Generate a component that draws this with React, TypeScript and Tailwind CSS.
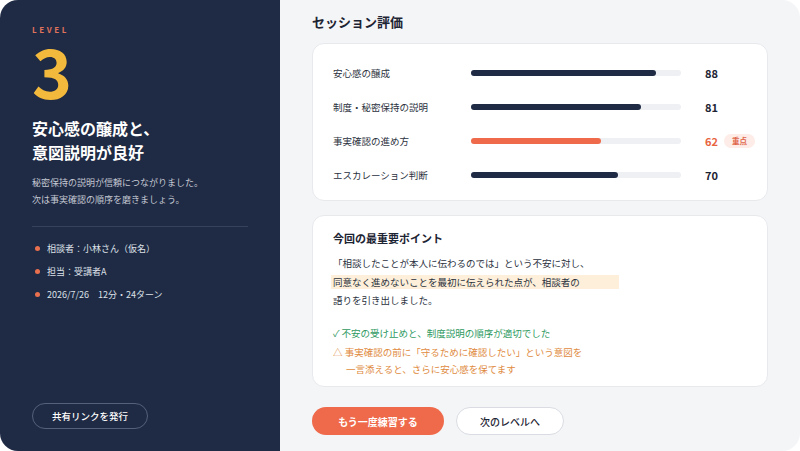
import React from "react";

const font = { fontFamily: '"Noto Sans CJK JP", "Noto Sans", sans-serif' };

const rows = [
  { label: "安心感の醸成", value: 88, focus: false },
  { label: "制度・秘密保持の説明", value: 81, focus: false },
  { label: "事実確認の進め方", value: 62, focus: true },
  { label: "エスカレーション判断", value: 70, focus: false },
];

export default function App() {
  return (
    <div className="w-[800px] h-[451px] bg-white" style={font}>
      <div className="w-[800px] h-[451px] rounded-[18px] overflow-hidden flex">
        {/* Left panel */}
        <div className="w-[280px] shrink-0 h-full bg-[#1f2a44] flex flex-col px-8 pt-[24px] pb-[22px]">
          <div className="text-[8px] leading-[12px] font-bold tracking-[0.32em] text-[#e0735c]">LEVEL</div>
          <div className="text-[68px] leading-[68px] font-bold text-[#f3b93c]">3</div>
          <div className="mt-[12px] text-[16px] leading-[24px] font-bold text-white">
            安心感の醸成と、
            <br />
            意図説明が良好
          </div>
          <div className="mt-[10px] text-[9px] leading-[17px] text-[#c3c8d3]">
            秘密保持の説明が信頼につながりました。
            <br />
            次は事実確認の順序を磨きましょう。
          </div>
          <div className="mt-[18px] h-px bg-[#36415b]" />
          <div className="mt-[10px] flex flex-col">
            {["相談者：小林さん（仮名）", "担当：受講者A", "2026/7/26　12分・24ターン"].map((t) => (
              <div key={t} className="h-[23px] flex items-center gap-[7px] text-[9px] text-[#dde1e8]">
                <span className="ml-[3px] w-[5px] h-[5px] rounded-full bg-[#e8704f]" />
                <span>{t}</span>
              </div>
            ))}
          </div>
          <div className="mt-auto">
            <button className="w-[116px] h-[26px] rounded-full border border-[#56607a] text-[9.5px] font-medium text-white flex items-center justify-center">
              共有リンクを発行
            </button>
          </div>
        </div>

        {/* Right panel */}
        <div className="flex-1 min-w-0 h-full bg-[#f4f5f7] px-8 pt-3 flex flex-col">
          <div className="text-[13px] leading-[20px] font-bold text-[#1d2433]">セッション評価</div>
          <div className="mt-[11px] h-[158px] bg-white rounded-[12px] border border-[#e7e9ed] px-5 pt-[12px] flex flex-col">
            {rows.map((r) => (
              <div key={r.label} className="h-[34px] flex items-center">
                <div className="w-[138px] shrink-0 text-[9.5px] text-[#2b3240]">{r.label}</div>
                <div className="w-[210px] shrink-0 h-[6px] rounded-full bg-[#eef0f3]">
                  <div
                    className={`h-full rounded-full ${r.focus ? "bg-[#ee6a4a]" : "bg-[#1f2a44]"}`}
                    style={{ width: `${r.value}%` }}
                  />
                </div>
                <div className={`ml-[24px] shrink-0 text-[11px] font-bold ${r.focus ? "text-[#e8643f]" : "text-[#1d2433]"}`}>
                  {r.value}
                </div>
                {r.focus && (
                  <div className="ml-[6px] shrink-0 whitespace-nowrap h-[14px] px-[8px] rounded-full bg-[#fdece7] text-[7.5px] font-bold text-[#e0664a] flex items-center">
                    重点
                  </div>
                )}
              </div>
            ))}
          </div>

          <div className="mt-[14px] h-[172px] bg-white rounded-[12px] border border-[#e7e9ed] px-5 pt-[14px]">
            <div className="text-[11px] leading-[16px] font-bold text-[#1d2433]">今回の最重要ポイント</div>
            <div className="mt-[8px] text-[9.5px] leading-[18.5px] text-[#2b3240]">
              <div>「相談したことが本人に伝わるのでは」という不安に対し、</div>
              <div>
                <span className="inline-block -ml-[2px] pl-[2px] w-[288px] h-[14px] leading-[14px] bg-[#fdefd9]">
                  同意なく進めないことを最初に伝えられた点が、相談者の
                </span>
              </div>
              <div>語りを引き出しました。</div>
            </div>
            <div className="mt-[14px] text-[9.5px] leading-[18px] text-[#2e9a5f]">✓ 不安の受け止めと、制度説明の順序が適切でした</div>
            <div className="mt-[2px] text-[9.5px] leading-[17px] text-[#e08a3e]">
              <div>△ 事実確認の前に「守るために確認したい」という意図を</div>
              <div className="pl-[13px]">一言添えると、さらに安心感を保てます</div>
            </div>
          </div>

          <div className="mt-[20px] flex gap-3">
            <button className="w-[132px] h-[28px] rounded-full bg-[#ef6a4b] text-white text-[10px] font-bold flex items-center justify-center">
              もう一度練習する
            </button>
            <button className="w-[108px] h-[28px] rounded-full bg-white border border-[#d9dce2] text-[#1d2433] text-[10px] font-medium flex items-center justify-center">
              次のレベルへ
            </button>
          </div>
        </div>
      </div>
    </div>
  );
}
